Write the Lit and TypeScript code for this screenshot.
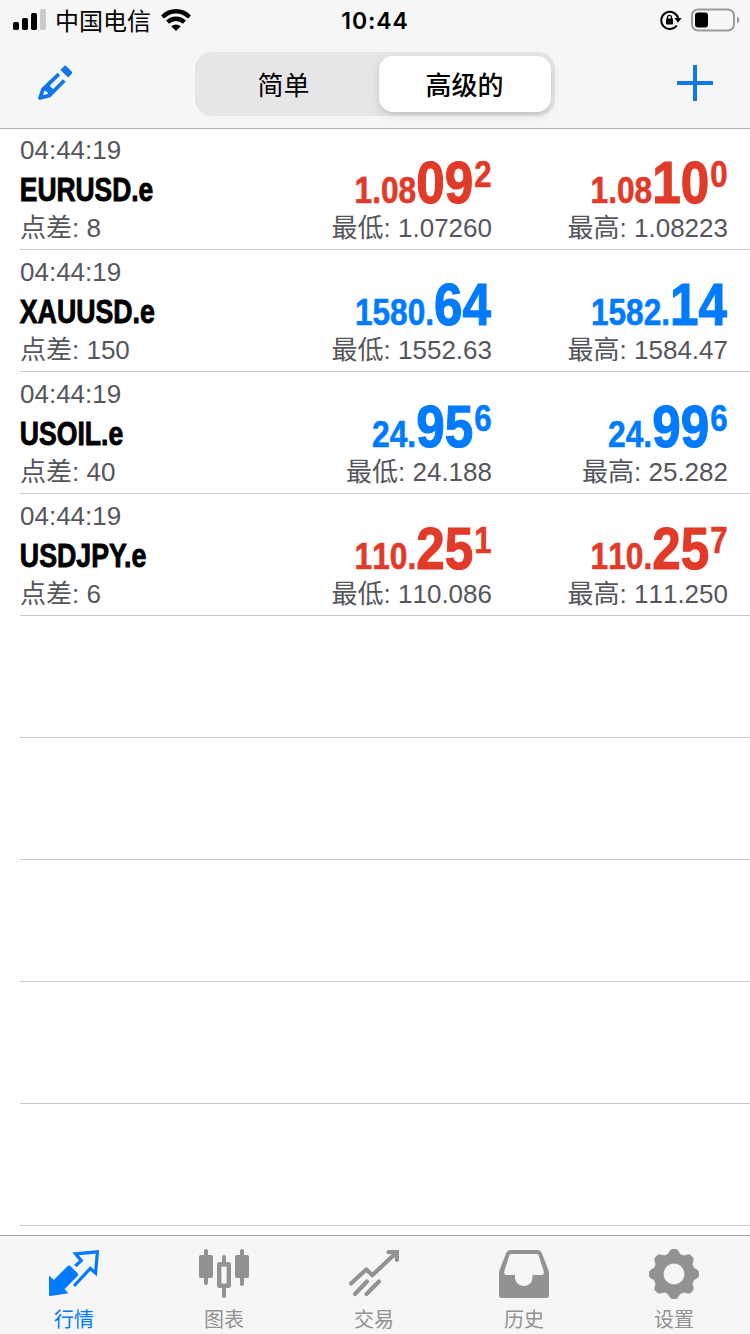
import { LitElement, html, svg, css } from "lit";
import { customElement, property } from "lit/decorators.js";

interface Quote {
  symbol: string;
  symbolWidth: number;
  spread: string;
  tone: "red" | "blue";
  bid: string[];
  ask: string[];
  low: string;
  high: string;
}

const QUOTES: Quote[] = [
  { symbol: "EURUSD.e", symbolWidth: 133.5, spread: "8", tone: "red", bid: ["1.08", "09", "2"], ask: ["1.08", "10", "0"], low: "1.07260", high: "1.08223" },
  { symbol: "XAUUSD.e", symbolWidth: 135, spread: "150", tone: "blue", bid: ["1580.", "64", ""], ask: ["1582.", "14", ""], low: "1552.63", high: "1584.47" },
  { symbol: "USOIL.e", symbolWidth: 103.5, spread: "40", tone: "blue", bid: ["24.", "95", "6"], ask: ["24.", "99", "6"], low: "24.188", high: "25.282" },
  { symbol: "USDJPY.e", symbolWidth: 126.5, spread: "6", tone: "red", bid: ["110.", "25", "1"], ask: ["110.", "25", "7"], low: "110.086", high: "111.250" },
];

/* Condensed bold price: leading part, enlarged pips and raised fraction. */
@customElement("price-tag")
class PriceTag extends LitElement {
  @property({ attribute: false }) parts: string[] = [];
  static styles = css`
    :host { display: block; height: 78px; }
    svg { display: block; margin-left: auto; overflow: visible; }
    text { font-family: "Liberation Sans", Arial, sans-serif; font-weight: 700; font-kerning: none; fill: currentColor; stroke: currentColor; stroke-width: 0.6px; }
    .small { font-size: 36px; }
    .big { font-size: 60px; stroke-width: 1.2px; }
  `;
  render() {
    const [lead, pips, frac] = this.parts;
    const leadW = [...(lead ?? "")].reduce((w, c) => w + (c === "." ? 9.4 : 17.4), 0);
    const pipsW = 57;
    const fracX = frac ? 182.2 : 199;
    const pipsX = fracX - pipsW - (frac ? 1 : 0);
    return html`<svg width="200" height="78" viewBox="0 0 200 78">
      <text class="small" x=${pipsX - leadW} y="67.6" textLength=${leadW} lengthAdjust="spacingAndGlyphs">${lead}</text>
      <text class="big" x=${pipsX} y="68.4" textLength=${pipsW} lengthAdjust="spacingAndGlyphs">${pips}</text>
      ${frac ? svg`<text class="small" x=${fracX} y="51.6" textLength="17.4" lengthAdjust="spacingAndGlyphs">${frac}</text>` : ""}
    </svg>`;
  }
}

@customElement("quote-row")
class QuoteRow extends LitElement {
  @property({ attribute: false }) quote?: Quote;
  static styles = css`
    :host { display: block; box-sizing: border-box; height: 122px; margin-left: 20px; border-bottom: 1px solid #c8c7cc; }
    .row { display: grid; grid-template-columns: 1fr 236px 236px; padding: 7px 22px 0 0; }
    .text { font: 26px/30px "Liberation Sans", "Noto Sans CJK SC", sans-serif; font-kerning: none; color: #55565b; white-space: nowrap; }
    .right { text-align: right; }
    .name { display: block; overflow: visible; }
    .name text { font: 700 33.6px "Liberation Sans", Arial, sans-serif; fill: #000; stroke: #000; stroke-width: 0.9px; }
    .red { color: #e23a28; }
    .blue { color: #007aff; }
  `;
  render() {
    const q = this.quote;
    if (!q) return html``;
    return html`<div class="row">
      <div>
        <div class="text">04:44:19</div>
        <svg class="name" width="200" height="48" viewBox="0 0 200 48">
          <text x="-.2" y="36.400" textLength=${q.symbolWidth} lengthAdjust="spacingAndGlyphs">${q.symbol}</text>
        </svg>
        <div class="text">点差: ${q.spread}</div>
      </div>
      <div>
        <price-tag class=${q.tone} .parts=${q.bid}></price-tag>
        <div class="text right">最低: ${q.low}</div>
      </div>
      <div>
        <price-tag class=${q.tone} .parts=${q.ask}></price-tag>
        <div class="text right">最高: ${q.high}</div>
      </div>
    </div>`;
  }
}

const gearPath = (() => {
  const points: string[] = [];
  for (let i = 0; i < 8; i++) {
    for (const [offset, radius] of [[-17, 20.6], [-9.5, 23.6], [-5, 25], [5, 25], [9.5, 23.6], [17, 20.6]]) {
      const a = ((i * 45 + offset - 90) * Math.PI) / 180;
      points.push(`${(25 + radius * Math.cos(a)).toFixed(2)} ${(25 + radius * Math.sin(a)).toFixed(2)}`);
    }
  }
  return `M${points.join("L")}Z M25 14.3a10.7 10.7 0 1 0 0 21.4a10.7 10.7 0 1 0 0-21.4Z`;
})();

const TABS = [
  {
    label: "行情",
    icon: svg`<path fill="currentColor" d="M0 26.5L4.800 31L18.500 17.200Q20 15.800 21.500 17.200L28.500 24Q29.800 25.500 28.500 27L15.500 40.300L19.500 44.300L1.500 47Q0 47 0 45.500Z"/>
      <path fill="none" stroke="currentColor" stroke-width="3.2" d="M26.300 17L32.300 11.600L26.500 4.800L48.400 2.800L46.600 24.200L41.300 19.400L25 37"/>`,
  },
  {
    label: "图表",
    icon: svg`<g fill="currentColor"><rect x="0" y="6" width="14" height="23" rx="2"/><rect x="5" y="0" width="4" height="36" rx="2"/>
      <rect x="36" y="6" width="14" height="23" rx="2"/><rect x="41" y="0" width="4" height="37" rx="2"/>
      <rect x="23" y="6" width="4" height="10" rx="2"/><rect x="23" y="36" width="4" height="13" rx="2"/></g>
      <rect x="20.2" y="15.2" width="9.6" height="21.6" rx=".5" fill="none" stroke="currentColor" stroke-width="4.4" stroke-linejoin="round"/>`,
  },
  {
    label: "交易",
    icon: svg`<g fill="none" stroke="currentColor" stroke-width="4.200" stroke-linecap="round" stroke-linejoin="round"><path d="M2 34.500L17.300 20.500L23.300 26.200L47.500 3.500"/><path d="M39.500 3.200H47.900V11" stroke-linejoin="miter"/><path d="M18 32.500L6 45M30 32.500L17.500 45"/></g>`,
  },
  {
    label: "历史",
    icon: svg`<path fill="currentColor" fill-rule="evenodd" d="M11.5 1H38.5Q41.5 1 42.7 3.8L49.2 20.5Q50 22.5 50 25V46Q50 49 47 49H3Q0 49 0 46V25Q0 22.5 .8 20.5L7.3 3.8Q8.5 1 11.5 1ZM12.5 5Q10.8 5 10.2 6.7L5.3 22.2Q4.7 26 7 26H16V28C16 33.5 20 37 25 37S33.5 33.5 33.5 28V26H42.5Q45.5 26 44.7 22.2L39.8 6.7Q39.2 5 37.5 5Z"/>`,
  },
  { label: "设置", icon: svg`<path fill="currentColor" stroke="currentColor" stroke-width=".6" stroke-linejoin="round" fill-rule="evenodd" d=${gearPath}/>` },
];

@customElement("app-root")
class AppRoot extends LitElement {
  static styles = css`
    :host { display: flex; flex-direction: column; width: 750px; height: 1334px; overflow: hidden; background: #fff; font-family: "Liberation Sans", "Noto Sans CJK SC", sans-serif; }
    svg { display: block; }
    header { flex: none; box-sizing: border-box; height: 129px; background: #f6f6f6; border-bottom: 1px solid #b2b2b2; }
    .status { display: grid; grid-template-columns: 1fr 100px 1fr; grid-template-rows: 40px; align-items: center; height: 40px; }
    .left { display: flex; align-items: center; padding-left: 13px; }
    .carrier { font: 24px/38px "Noto Sans CJK SC", sans-serif; margin: 0 10px 1px 9px; white-space: nowrap; }
    .clock { font: 600 23px/38px Inter, sans-serif; padding-top: 1px; letter-spacing: 0.9px; text-align: center; white-space: nowrap; }
    .rightside { display: flex; align-items: center; justify-content: flex-end; gap: 9px; padding-right: 10px; }
    .battery { margin-bottom: 1px; }
    .nav { display: grid; grid-template-columns: 195px 360px 195px; height: 88px; align-items: center; color: #0f78e8; }
    .edit { margin: 0 0 2px 37px; }
    .add { margin: 0 0 2px 122px; }
    .segments { display: flex; box-sizing: border-box; height: 64px; padding: 4px; border-radius: 17px; background: #e6e6e8; color: #000; font: 26px/55px "Noto Sans CJK SC", sans-serif; text-align: center; }
    .segment { flex: 1; padding-right: 11px; }
    .active { flex: none; width: 171px; padding-right: 1px; border-radius: 14px; background: #fff; font-weight: 500; box-shadow: 0 3px 10px rgba(0, 0, 0, 0.13), 0 2px 2px rgba(0, 0, 0, 0.05); }
    main { flex: 1; min-height: 0; overflow: hidden; }
    .list { margin-top: -1px; }
    nav { flex: none; box-sizing: border-box; width: 751px; height: 99px; display: grid; grid-template-columns: repeat(5, 150px); margin-left: -1px; padding-top: 13px; background: #f6f6f6; border-top: 1px solid #a8a8a8; }
    .tab { display: flex; flex-direction: column; align-items: center; gap: 6px; color: #929292; }
    .tab.on { color: #007aff; }
    .label { font: 20px/28px "Noto Sans CJK SC", sans-serif; }
  `;
  render() {
    return html`
      <header>
        <div class="status">
          <div class="left">
            <svg width="33" height="22" viewBox="0 0 33 22"><rect y="13" width="6" height="8" rx="1.8"/><rect x="9" y="9" width="6" height="12" rx="1.8"/><rect x="18" y="4" width="6" height="17" rx="1.8"/><rect x="27" y="0" width="6" height="21" rx="1.8" fill="#cbcbcb"/></svg>
            <span class="carrier">中国电信</span>
            <svg width="30" height="22" viewBox="0 0 30 22"><g fill="none" stroke="#000" stroke-width="4.400"><path d="M1.5 8Q7.500 2.200 15 2.200T28.500 8"/><path d="M6.600 13.200Q10.300 9.800 15 9.800T23.400 13.200"/></g><path d="M10.300 17.300Q15 13.500 19.700 17.300L15 22Z"/></svg>
          </div>
          <span class="clock">10:44</span>
          <div class="rightside">
            <svg width="22" height="20" viewBox="0 0 22 20"><path d="M16.800 15.500A8.600 8.600 0 1 1 18.100 8" fill="none" stroke="#000" stroke-width="2"/><path d="M14.400 8H21.600L18 12.800Z"/><rect x="6" y="8.500" width="7" height="6" rx=".8"/><path d="M7.500 9V7.300a2 2 0 0 1 4 0V9" fill="none" stroke="#000" stroke-width="1.300"/></svg>
            <svg class="battery" width="49" height="24" viewBox="0 0 49 24"><rect x="1" y="1.500" width="42" height="21" rx="6" fill="none" stroke="#999" stroke-width="2"/><rect x="4" y="4.500" width="13" height="15" rx="3"/><path d="M46 8.500Q48.500 9.500 48.500 12T46 15.500Z" fill="#999"/></svg>
          </div>
        </div>
        <div class="nav">
          <svg class="edit" width="36" height="36" viewBox="0 0 36 36">
            <path fill="currentColor" d="M23.300 5L27 1.200Q28.200 0 29.400 1.200L34.700 6.500Q35.800 7.700 34.700 8.900L31.200 12.500Z"/>
            <path fill="none" stroke="currentColor" stroke-width="3.800" stroke-linejoin="round" d="M21.800 9.200L6 24.300L3 33L12.500 30.300L27.300 15.500"/>
            <path fill="none" stroke="currentColor" stroke-width="3" d="M6.800 24Q12.500 24.500 12.800 30"/>
            <path fill="currentColor" d="M6 24L12.500 18.500L13.500 21.700L15.500 23.500L17.500 25L13 30.500Q11.500 25.500 6 24Z"/>
          </svg>
          <div class="segments"><span class="segment">简单</span><span class="segment active">高级的</span></div>
          <svg class="add" width="36" height="36" viewBox="0 0 36 36"><path d="M18 0V36M0 18H36" stroke="currentColor" stroke-width="4"/></svg>
        </div>
      </header>
      <main><div class="list">
        ${QUOTES.map((quote) => html`<quote-row .quote=${quote}></quote-row>`)}
        ${[0, 1, 2, 3, 4].map(() => html`<quote-row></quote-row>`)}
      </div></main>
      <nav>
        ${TABS.map((tab, i) => html`<div class="tab ${i === 0 ? "on" : ""}"><svg width="50" height="50" viewBox="0 0 50 50">${tab.icon}</svg><span class="label">${tab.label}</span></div>`)}
      </nav>`;
  }
}
